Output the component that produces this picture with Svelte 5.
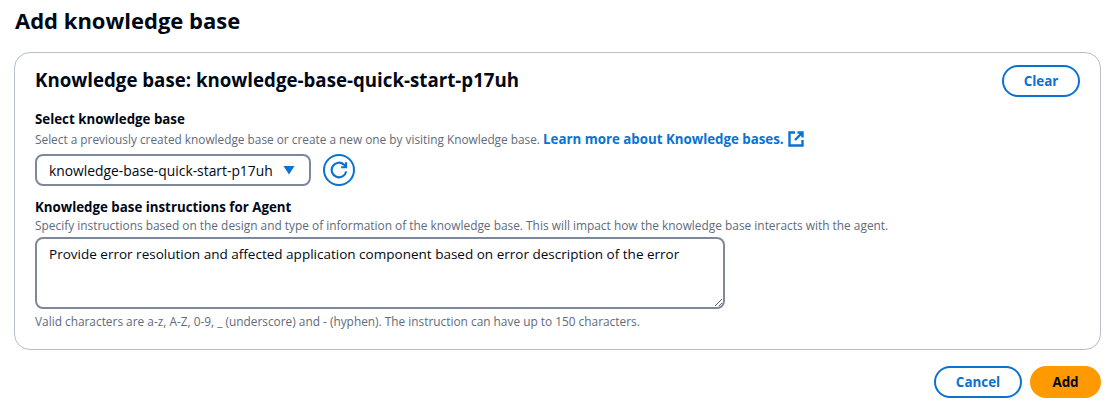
<script lang="ts">
  let instructions = $state("Provide error resolution and affected application component based on error description of the error");
</script>

<div class="page">
  <h1>Add knowledge base</h1>

  <section class="card">
    <div class="card-header">
      <h2>Knowledge base: knowledge-base-quick-start-p17uh</h2>
      <button type="button" class="btn btn-normal clear">Clear</button>
    </div>

    <div class="field first">
      <div class="label">Select knowledge base</div>
      <div class="desc">
        Select a previously created knowledge base or create a new one by visiting Knowledge base.
        <a href="#learn" class="link">Learn more about Knowledge bases.
          <svg class="external" viewBox="0 0 16 16" width="16" height="16" fill="none" stroke="currentColor" stroke-width="2.4">
            <path d="M7 1.5H1.5v13h13V9" />
            <path d="M9.5 1.5h5v5M14 2 7 9" />
          </svg>
        </a>
      </div>
      <div class="select-row">
        <div class="select">
          <span>knowledge-base-quick-start-p17uh</span>
          <svg class="caret" viewBox="0 0 12 10" width="12" height="10"><path d="M0.5 1h11L6 9.5z" fill="#0972d3" /></svg>
        </div>
        <button type="button" class="refresh" aria-label="Refresh">
          <svg viewBox="0 0 16 16" width="18" height="18" fill="none" stroke="#0972d3" stroke-width="1.9">
            <path d="M14.4 9.2A6.5 6.5 0 1 1 12.4 3.2L14 4.8" />
            <path d="M14.3 1.2v4.4H9.9" />
          </svg>
        </button>
      </div>
    </div>

    <div class="field second">
      <div class="label">Knowledge base instructions for Agent</div>
      <div class="desc tight">Specify instructions based on the design and type of information of the knowledge base. This will impact how the knowledge base interacts with the agent.</div>
      <textarea bind:value={instructions}></textarea>
      <div class="constraint">Valid characters are a-z, A-Z, 0-9, _ (underscore) and - (hyphen). The instruction can have up to 150 characters.</div>
    </div>
  </section>

  <div class="actions">
    <button type="button" class="btn btn-normal cancel">Cancel</button>
    <button type="button" class="btn btn-primary">Add</button>
  </div>
</div>

<style>
  :global(body) {
    margin: 0;
    background: #fff;
  }

  .page {
    width: 1114px;
    height: 407px;
    box-sizing: border-box;
    padding: 5px 13px 0 14px;
    font-family: "Open Sans", "Noto Sans", sans-serif;
    color: #000716;
    overflow: hidden;
  }

  h1 {
    margin: 0 0 17px;
    font-size: 22px;
    line-height: 30px;
    font-weight: 700;
    padding-left: 1px;
  }

  .card {
    height: 298px;
    box-sizing: border-box;
    border: 1px solid #b6bec9;
    border-radius: 16px;
    padding: 12px 20px 0;
  }

  .card-header {
    display: flex;
    justify-content: space-between;
    align-items: flex-start;
  }

  h2 {
    margin: 0;
    font-size: 18.7px;
    line-height: 30px;
    font-weight: 700;
  }

  .btn {
    font-family: inherit;
    font-size: 13.4px;
    font-weight: 700;
    height: 32px;
    border-radius: 20px;
    box-sizing: border-box;
    cursor: pointer;
  }

  .btn-normal {
    background: #fff;
    border: 2px solid #0972d3;
    color: #0972d3;
  }

  .btn-primary {
    background: #ff9900;
    border: 2px solid #ff9900;
    color: #000716;
    width: 71px;
  }

  .clear {
    width: 78px;
  }

  .cancel {
    width: 88px;
  }

  .field.first {
    margin-top: 13px;
  }

  .field.second {
    margin-top: 12px;
  }

  .label {
    font-size: 13.3px;
    line-height: 18px;
    font-weight: 700;
  }

  .desc {
    font-size: 11.83px;
    line-height: 22px;
    color: #5f6b7a;
  }

  .desc.tight {
    font-size: 11.9px;
    line-height: 18px;
  }

  .constraint {
    font-size: 11.87px;
    line-height: 16px;
    color: #5f6b7a;
    margin-top: 4px;
  }

  .link {
    color: #0972d3;
    font-size: 13.3px;
    font-weight: 700;
    text-decoration: none;
  }

  .external {
    vertical-align: -3px;
    margin-left: 1px;
  }

  .select-row {
    display: flex;
    align-items: center;
    gap: 12px;
    margin-top: 4px;
  }

  .select {
    width: 276px;
    height: 32px;
    box-sizing: border-box;
    border: 2px solid #7d8998;
    border-radius: 8px;
    padding: 0 14px 0 12px;
    display: flex;
    align-items: center;
    justify-content: space-between;
    font-size: 13.85px;
  }

  .refresh {
    width: 32px;
    height: 32px;
    padding: 0;
    border: 2px solid #0972d3;
    border-radius: 50%;
    background: #fff;
    display: flex;
    align-items: center;
    justify-content: center;
  }

  textarea {
    display: block;
    width: 690px;
    height: 72px;
    box-sizing: border-box;
    margin-top: 3px;
    border: 2px solid #7d8998;
    border-radius: 8px;
    padding: 5px 12px;
    font-family: inherit;
    font-size: 13.53px;
    line-height: 20px;
    color: #000716;
    outline: none;
  }

  .actions {
    display: flex;
    justify-content: flex-end;
    gap: 8px;
    margin-top: 16px;
  }
</style>
